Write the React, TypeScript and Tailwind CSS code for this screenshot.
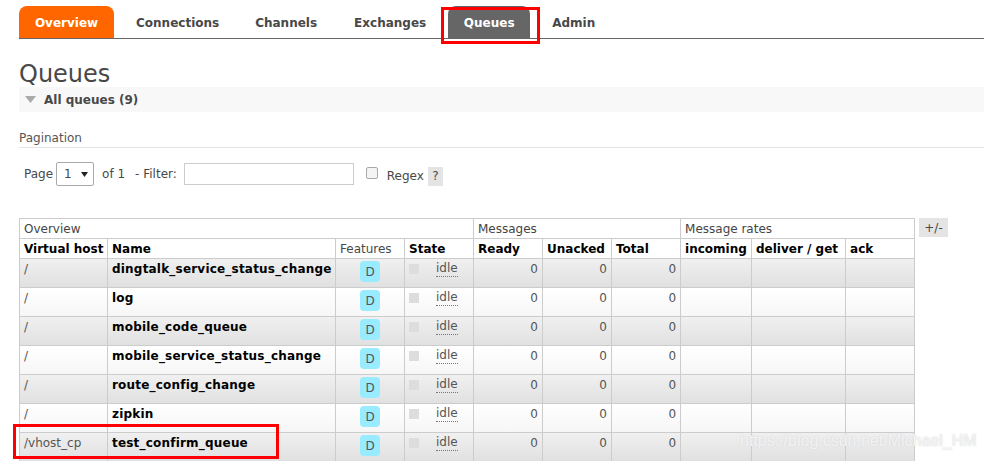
const tabs = ['Connections', 'Channels', 'Exchanges'];

const queues = [
  { vhost: '/', name: 'dingtalk_service_status_change' },
  { vhost: '/', name: 'log' },
  { vhost: '/', name: 'mobile_code_queue' },
  { vhost: '/', name: 'mobile_service_status_change' },
  { vhost: '/', name: 'route_config_change' },
  { vhost: '/', name: 'zipkin' },
  { vhost: '/vhost_cp', name: 'test_confirm_queue' },
];

const cell = 'border border-[#ccc] px-[4px] align-top';
const head = 'border border-[#ccc] px-[4px] text-left font-bold text-black whitespace-nowrap h-[20px] leading-[18px]';
const group = 'border border-[#ccc] px-[4px] text-left font-normal text-[#444] whitespace-nowrap h-[20px] leading-[18px]';
const num = 'border border-[#ccc] px-[4px] pt-[1px] align-top text-right text-[#555]';

export default function App() {
  return (
    <div className="relative h-[461px] w-[984px] overflow-hidden bg-white text-[12px] text-[#484848] font-['DejaVu_Sans',Verdana,sans-serif]">
      {/* Nav */}
      <div className="mx-[19px] mt-[6px] flex h-[33px] w-[965px] items-stretch border-b border-[#666] pt-[1px] font-bold text-[#484848]">
        <div className="-mt-[1px] flex w-[95px] items-center justify-center rounded-t-[8px] bg-[#f60] pt-[1px] text-white">Overview</div>
        <div className="ml-[22px] flex items-center">{tabs[0]}</div>
        <div className="ml-[36px] flex items-center">{tabs[1]}</div>
        <div className="ml-[37px] flex items-center">{tabs[2]}</div>
        <div className="ml-[22px] -mt-[1px] flex w-[82px] items-center justify-center rounded-t-[8px] bg-[#666] pt-[1px] text-white">Queues</div>
        <div className="ml-[22px] flex items-center">Admin</div>
      </div>

      {/* Page heading */}
      <h1 className="ml-[19px] mt-[21px] h-[27px] text-[24px] leading-[28px] font-normal text-[#484848]">Queues</h1>
      <div className="ml-[19px] flex h-[25px] items-center bg-[#f8f8f8] pl-[6px]">
        <svg width="11" height="7" viewBox="0 0 11 7" className="mr-[8px]">
          <path d="M0 0h11L5.500 7z" fill="#aaa" />
        </svg>
        <span className="font-bold text-[#484848]">All queues (9)</span>
      </div>

      {/* Pagination */}
      <div className="ml-[19px] mt-[18px] h-[18px] border-b border-[#e4e4e4] pt-[1px] text-[12px] leading-[14px] text-[#555]">Pagination</div>
      <div className="ml-[24px] mt-[14px] flex h-[24px] items-center">
        <span>Page</span>
        <div className="ml-[3px] flex h-[24px] w-[38px] items-center justify-between rounded-[2px] border border-[#aaa] pl-[7px] pr-[5px]">
          <span className="text-[#484848]">1</span>
          <svg width="7" height="5" viewBox="0 0 7 5">
            <path d="M0 0h7L3.500 5z" fill="#222" />
          </svg>
        </div>
        <span className="ml-[8px]">of 1</span>
        <span className="ml-[10px]">- Filter:</span>
        <div className="ml-[7px] h-[22px] w-[170px] border border-[#ccc] bg-white" />
        <div className="ml-[12px] h-[12px] w-[12px] -translate-y-[1px] rounded-[2px] border border-[#aaa] bg-[#f4f4f4]" />
        <span className="ml-[9px] translate-y-[2px]">Regex</span>
        <span className="ml-[4px] flex h-[19px] w-[15px] translate-y-[2px] items-center justify-center bg-[#e4e4e4]">?</span>
      </div>

      {/* Table */}
      <div className="ml-[19px] mt-[32px] flex items-start">
        <table className="w-[895px] table-fixed border-collapse text-[12px]">
          <colgroup>
            <col className="w-[88px]" />
            <col className="w-[228px]" />
            <col className="w-[69px]" />
            <col className="w-[69px]" />
            <col className="w-[69px]" />
            <col className="w-[69px]" />
            <col className="w-[69px]" />
            <col className="w-[71px]" />
            <col className="w-[94px]" />
            <col className="w-[69px]" />
          </colgroup>
          <thead>
            <tr>
              <th colSpan={4} className={group}>Overview</th>
              <th colSpan={3} className={group}>Messages</th>
              <th colSpan={3} className={group}>Message rates</th>
            </tr>
            <tr>
              <th className={head}>Virtual host</th>
              <th className={head}>Name</th>
              <th className="border border-[#ccc] px-[4px] text-left font-normal text-[#484848]">Features</th>
              <th className={head}>State</th>
              <th className={head}>Ready</th>
              <th className={head}>Unacked</th>
              <th className={head}>Total</th>
              <th className={head}>incoming</th>
              <th className={head}>deliver / get</th>
              <th className={head}>ack</th>
            </tr>
          </thead>
          <tbody>
            {queues.map((q, i) => (
              <tr
                key={q.name}
                className={
                  i % 2 === 0
                    ? 'h-[29px] bg-linear-to-b from-[#f0f0f0] to-[#e0e0e0]'
                    : 'h-[29px] bg-linear-to-b from-white to-[#f6f6f6]'
                }
              >
                <td className={`${cell} pt-[1px] whitespace-nowrap text-[#555]`}>{q.vhost}</td>
                <td className={`${cell} pt-[1px] font-bold whitespace-nowrap tracking-[0.2px] text-black`}>{q.name}</td>
                <td className={`${cell} pt-[2px]`}>
                  <div className="mx-auto flex h-[21px] w-[20px] items-center justify-center rounded-[4px] bg-[#99ebff] text-[#555]">D</div>
                </td>
                <td className={`${cell} pt-[5px]`}>
                  <div className="flex items-start">
                    <span className="h-[10px] w-[10px] bg-[#ddd]" />
                    <span className="-mt-[3px] ml-[17px] border-b border-dotted border-[#777] leading-[15px] text-[#555]">idle</span>
                  </div>
                </td>
                <td className={num}>0</td>
                <td className={num}>0</td>
                <td className={num}>0</td>
                <td className={cell} />
                <td className={cell} />
                <td className={cell} />
              </tr>
            ))}
          </tbody>
        </table>
        <div className="ml-[4px] flex h-[19px] w-[29px] items-center justify-center bg-[#e4e4e4] text-[#484848]">+/-</div>
      </div>

      {/* Red annotations */}
      <div className="absolute left-[441px] top-[7px] h-[37px] w-[99px] border-[3px] border-[#f00]" />
      <div className="absolute left-[13px] top-[424px] h-[35px] w-[266px] border-[3px] border-[#f00]" />

      {/* Watermark */}
      <div className="absolute left-[740px] top-[432px] whitespace-nowrap text-[16px] leading-[18px] text-[#f3f3f3] [text-shadow:0_0_2px_#d0d0d0] font-['Liberation_Sans',Arial,sans-serif]">https://blog.csdn.net/Michael_HM</div>
    </div>
  );
}
